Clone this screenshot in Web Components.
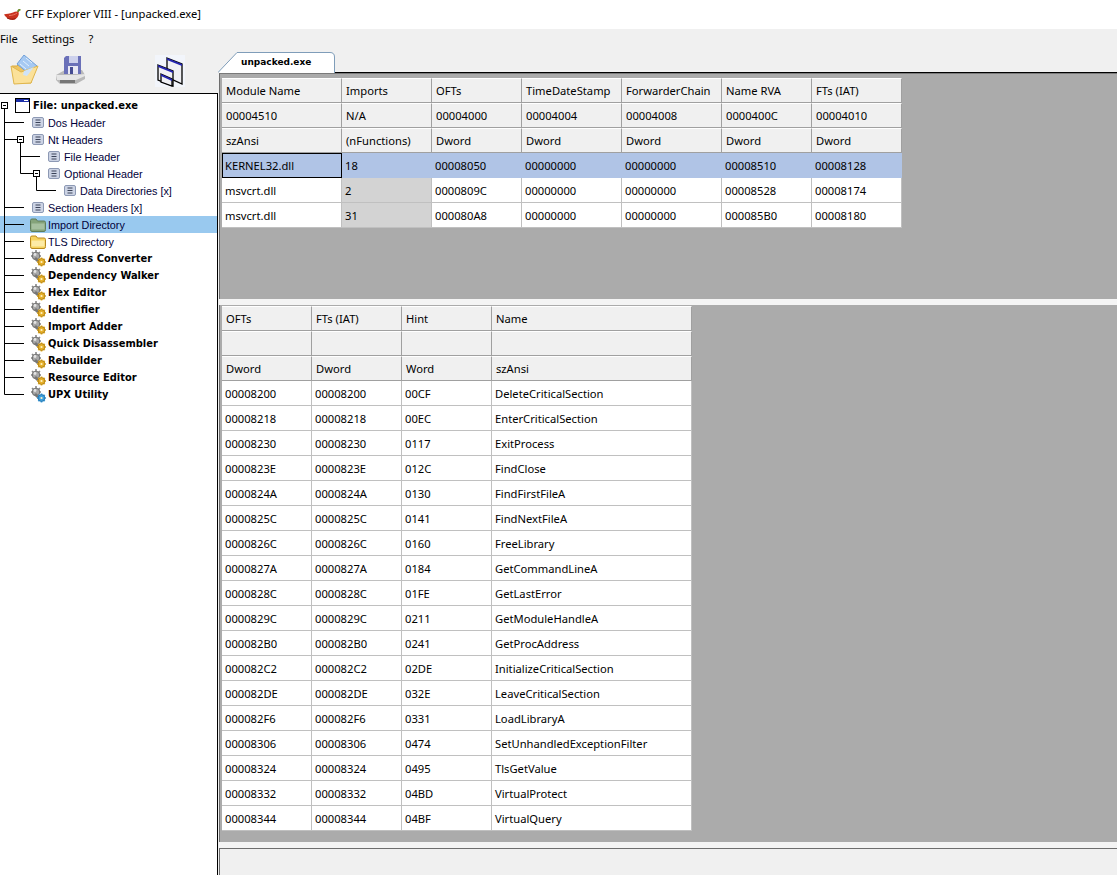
<!DOCTYPE html>
<html>
<head>
<meta charset="utf-8">
<title>CFF Explorer VIII - [unpacked.exe]</title>
<style>
  html, body { margin: 0; height: 100%; overflow: hidden; background: #f0f0f0; }
  body { font: 11.200px "Noto Sans", "Liberation Sans", sans-serif; color: #000; }
</style>
</head>
<body>
<cff-app></cff-app>

<script>
const gearIcon = (c, d) => `<svg width="16" height="17" viewBox="0 0 16 17">
  <path d="M6 0v2M2 2l1.500 1.500M10 2L8.500 3.500M1 6h2M11 6H9" stroke="#8a8a8a" stroke-width="1.600"/>
  <circle cx="6" cy="6" r="3.800" fill="#a8a8a8" stroke="#5c5c5c" stroke-width=".8"/><circle cx="5" cy="4.500" r="1.400" fill="#e4e4e4"/>
  <path d="M6 7l5 5-2 2-5-5z" fill="#777"/>
  <path d="M11.500 7.500v9M7 12h9M8.300 8.800l6.400 6.400M14.700 8.800l-6.400 6.400" stroke="${c}" stroke-width="1.700"/>
  <circle cx="11.500" cy="12" r="3.400" fill="${c}" stroke="${d}" stroke-width=".8"/><circle cx="11.500" cy="12" r="1.100" fill="#fff3c4"/></svg>`;

const ICONS = {
  pepper: `<svg width="17" height="12" viewBox="0 0 17 12"><path d="M0 5.500C2 4.500 6 5 9 3.500c2-1 4-1.500 5.500-.5 1 3-1 6-3.500 7.500C7 12 2 9 0 5.500z" fill="#c8321e"/><path d="M3 9c3 1.500 6 1.500 8.500.5" stroke="#8e1d10" fill="none"/><path d="M5 6.500c3 0 6-1 8-2.500" stroke="#ea7a64" fill="none"/><path d="M14 3c0-1.500 1-2.500 2.500-2.500" stroke="#6d8c2a" stroke-width="1.800" fill="none"/></svg>`,
  open: `<svg width="30" height="30" viewBox="0 0 30 30">
    <path d="M2 11h5l2-2 8 1 7 4-3 14H5z" fill="#eec462" stroke="#d8aa3f"/>
    <path d="M7 9l7-9 13 11-8 8z" fill="#a6c9f2" stroke="#6f9fd8"/>
    <path d="M10 9l6 5M13 6l6 5M16 3l6 5" stroke="#e3f0fc"/>
    <path d="M1 11l10 6 17-6-7 17-17 1z" fill="#fbe19a" stroke="#e0b64c"/>
    <path d="M14 16l10-4-7 9-4-1z" fill="#cfe3f8"/></svg>`,
  disk: `<svg width="30" height="30" viewBox="0 0 30 30">
    <path d="M0 20l9-5h17l3 5v4l-9 5H4l-4-4z" fill="#b9b9b9"/>
    <path d="M0 20h20l9-1v2l-9 4H1z" fill="#e6e6e6"/><path d="M4 25h15v3H4z" fill="#777"/>
    <path d="M10 1h15v18H8V3z" fill="#6a70b8"/><path d="M13 1h9v7h-9z" fill="#cdd1ec"/>
    <path d="M12 11h10v8H12z" fill="#e8e8f4"/><path d="M14 12h3v7h-3z" fill="#454c92"/></svg>`,
  windows: `<svg width="30" height="32" viewBox="0 0 30 32"><rect width="30" height="32" fill="#f2f5fb"/>
    <g stroke="#000" stroke-width="1.300" fill="#f0f0f4"><path d="M12 3l15 6v20l-15-7z"/><path d="M3 10l15 6v15L3 25z"/><path d="M6 19l11 5v7L6 27z"/></g>
    <path d="M12 3l15 6v2L12 5zM3 10l15 6v2L3 12zM6 19l11 5v2L6 21z" fill="#2424b0"/></svg>`,
  window: `<svg width="15" height="15" viewBox="0 0 15 15"><rect x=".5" y=".5" width="14" height="14" fill="#fff" stroke="#000"/><rect x="1" y="1" width="13" height="3" fill="#1c2fa8"/><rect x="9" y="2" width="4" height="1" fill="#fff"/></svg>`,
  doc: `<svg width="12" height="11" viewBox="0 0 12 11"><rect x=".5" y=".5" width="11" height="10" rx="1.500" fill="#ccd3e4" stroke="#8d99b4"/><path d="M3.500 3h5M3.500 5.500h5M3.500 8h5" stroke="#3a4258"/></svg>`,
  folder: `<svg width="16" height="14" viewBox="0 0 16 14"><path d="M.5 2.500Q.5 1 2 1h4l1.500 2H14q1.500 0 1.500 1.500v7q0 2-1.500 2H2q-1.500 0-1.500-2z" fill="#f6d35f" stroke="#b98a20"/><path d="M1.500 5.500h13v6H1.500z" fill="#fdeba6"/></svg>`,
  folderSel: `<svg width="16" height="14" viewBox="0 0 16 14"><path d="M.5 2.500Q.5 1 2 1h4l1.500 2H14q1.500 0 1.500 1.500v7q0 2-1.500 2H2q-1.500 0-1.500-2z" fill="#84a37a" stroke="#5f7d5a"/><path d="M1.500 5.500h13v6H1.500z" fill="#a6c0a0"/></svg>`,
  gear: gearIcon("#e6b02a", "#a87a10"),
  gearBlue: gearIcon("#3fa0dc", "#1f6ea8")
};

class TitleBar extends HTMLElement {
  constructor() {
    super();
    this.attachShadow({ mode: "open" }).innerHTML = `
      <style>
        :host { display: flex; align-items: center; height: 29px; background: #fff; padding: 0 0 0 4px; box-sizing: border-box; }
        svg { display: block; margin-right: 4px; }
        span { position: relative; top: -1px; }
      </style>
      ${ICONS.pepper}<span><slot></slot></span>`;
  }
}

class MenuBar extends HTMLElement {
  constructor() {
    super();
    this.attachShadow({ mode: "open" }).innerHTML = `
      <style>
        :host { display: flex; gap: 14px; height: 21px; box-sizing: border-box; padding-bottom: 2px; align-items: center; background: #f0f0f0; }
        ::slotted(span) { display: block; }
      </style>
      <slot></slot>`;
  }
}

class ToolBar extends HTMLElement {
  constructor() {
    super();
    this.attachShadow({ mode: "open" }).innerHTML = `
      <style>
        :host { display: flex; height: 43px; box-sizing: border-box; padding: 5px 0 0 10px; background: #f0f0f0; }
        svg { display: block; flex: none; }
        .disk { margin-left: 16px; }
        .win { margin-left: 69px; }
      </style>
      ${ICONS.open}<span class="disk">${ICONS.disk}</span><span class="win">${ICONS.windows}</span>`;
  }
}

class TreeRow extends HTMLElement {
  connectedCallback() {
    if (this.shadowRoot) return;
    const w = this.getAttribute("guide-width");
    const gap = this.getAttribute("gap") || 4;
    const icon = ICONS[this.getAttribute("icon")];
    this.attachShadow({ mode: "open" }).innerHTML = `
      <style>
        :host { display: flex; align-items: center; height: 17px; white-space: nowrap;
                font: 10.800px "Liberation Sans", sans-serif; color: #00003a; }
        :host([bold]) { font: bold 11px "DejaVu Sans Condensed", "Liberation Sans", sans-serif; color: #000; }
        :host([selected]) { background: #99c9ef; }
        .guide { flex: none; display: block; }
        .guide path { fill: none; stroke: #000; }
        .guide rect { fill: #fff; stroke: #000; }
        .icon { flex: none; display: flex; margin-right: ${gap}px; }
        .text { padding-top: 1px; }
        :host([bold]) .text { padding-top: 0; }
      </style>
      <svg class="guide" width="${w}" height="17">${this.getAttribute("guide")}</svg>
      <span class="icon">${icon}</span><span class="text"><slot></slot></span>`;
  }
}

class TreeView extends HTMLElement {
  constructor() {
    super();
    this.attachShadow({ mode: "open" }).innerHTML = `
      <style>
        :host { display: block; height: 100%; box-sizing: border-box; background: #fff;
                border-top: 1px solid #000; border-right: 1px solid #000; padding-top: 3px; overflow: hidden; }
      </style>
      <slot></slot>`;
  }
}

// boxes with a minus sign, and the connector lines for each row
const box = (cx) => `<rect x="${cx - 3}" y="5.500" width="6" height="6"/><path d="M${cx - 1.500} 8.500h3"/>`;
const trunk = `<path d="M4.500 0v17"/>`;
const leaf = trunk + `<path d="M4.500 8.500H24"/>`;
const TREE = [
  { label: "File: unpacked.exe", icon: "window", gw: 15, gap: 3, bold: 1, guide: box(4.5) + `<path d="M4.500 11.500V17"/>` },
  { label: "Dos Header", icon: "doc", gw: 32, guide: leaf },
  { label: "Nt Headers", icon: "doc", gw: 32, guide: trunk + `<path d="M4.500 8.500H17M20.500 11.500V17"/>` + box(20.5) },
  { label: "File Header", icon: "doc", gw: 48, guide: trunk + `<path d="M20.500 0v17M20.500 8.500H40"/>` },
  { label: "Optional Header", icon: "doc", gw: 48, guide: trunk + `<path d="M20.500 0v8.500H33M36.500 11.500V17"/>` + box(36.5) },
  { label: "Data Directories [x]", icon: "doc", gw: 64, guide: trunk + `<path d="M36.500 0v8.500H56"/>` },
  { label: "Section Headers [x]", icon: "doc", gw: 32, guide: leaf },
  { label: "Import Directory", icon: "folderSel", gw: 30, gap: 2, selected: 1, guide: leaf },
  { label: "TLS Directory", icon: "folder", gw: 30, gap: 2, guide: leaf },
  ...["Address Converter", "Dependency Walker", "Hex Editor", "Identifier", "Import Adder",
      "Quick Disassembler", "Rebuilder", "Resource Editor"].map(label =>
    ({ label, icon: "gear", gw: 30, gap: 2, bold: 1, guide: leaf })),
  { label: "UPX Utility", icon: "gearBlue", gw: 30, gap: 2, bold: 1, guide: `<path d="M4.500 0v8.500H24"/>` }
];

class TabStrip extends HTMLElement {
  constructor() {
    super();
    this.attachShadow({ mode: "open" }).innerHTML = `
      <style>
        :host { display: block; height: 23px; box-sizing: border-box; background: #f0f0f0; border-bottom: 1px solid #000; padding-top: 2px; }
        .tab { display: grid; width: 117px; height: 21px; }
        .tab > * { grid-area: 1 / 1; }
        svg { display: block; }
        span { font: bold 9px "DejaVu Sans", sans-serif; padding: 5px 0 0 23px; }
      </style>
      <div class="tab">
        <svg width="117" height="21"><path d="M0 20.500L19 .5H112Q116.500 .5 116.500 5V21H0z" fill="#fff"/><path d="M0 20.500L19 .5H112Q116.500 .5 116.500 5V21" fill="none" stroke="#7f9db9"/></svg>
        <span><slot></slot></span>
      </div>`;
  }
}

class DataGrid extends HTMLElement {
  constructor() {
    super();
    this.shadowDOM = this.attachShadow({ mode: "open" });
  }

  set table(t) {
    this._table = t;
    this.render();
  }

  render() {
    const t = this._table;
    const cols = t.widths.map(w => w + "px").join(" ");
    const head = t.head.map(r => r.map(c => `<div class="h">${c || ""}</div>`).join("")).join("");
    const body = t.rows.map((r, i) => r.map((c, j) => {
      let cls = "d";
      if (t.selected === i) cls += " sel";
      if (t.selected === i && j === 0) cls += " cur";
      if (t.shaded === j && t.selected !== i) cls += " shade";
      return `<div class="${cls}">${c}</div>`;
    }).join("")).join("");
    this.shadowDOM.innerHTML = `
      <style>
        :host { display: grid; grid-template-columns: ${cols}; grid-auto-rows: 25px; width: max-content; }
        div { box-sizing: border-box; height: 25px; white-space: nowrap; overflow: hidden; font-size: 11.200px; }
        .h { background: #f0f0f0; padding-left: 4px; line-height: 23px; border-right: 1px solid #a0a0a0; border-bottom: 1px solid #a0a0a0; border-top: 1px solid #fff; }
        .d { background: #fff; padding-left: 3px; line-height: 25px; border-right: 1px solid #c0c0c0; border-bottom: 1px solid #c0c0c0; }
        .sel { background: #b0c4e6; border-color: #b0c4e6; }
        .cur { border: 1px solid #000; padding-left: 2px; line-height: 23px; }
        .shade { background: #d3d3d3; }
      </style>
      ${head}${body}`;
  }
}

class SplitPane extends HTMLElement {
  constructor() {
    super();
    this.attachShadow({ mode: "open" }).innerHTML = `
      <style>
        :host { display: block; box-sizing: border-box; background: #ababab; overflow: hidden;
                border-left: 1px solid #6e6e6e; padding: var(--pad, 0 0 0 2px); height: var(--h); }
      </style>
      <slot></slot>`;
  }
}

class CffApp extends HTMLElement {
  constructor() {
    super();
    this.attachShadow({ mode: "open" }).innerHTML = `
      <style>
        :host { display: grid; grid-template-rows: 29px 21px 1fr; height: 875px; overflow: hidden; }
        .work { display: grid; grid-template-columns: 218px 1fr; min-height: 0; }
        .left { display: grid; grid-template-rows: 43px 1fr; min-height: 0; }
        .right { display: flex; flex-direction: column; min-width: 0; }
        .content { flex: 1; padding-left: 1px; background: #f0f0f0; display: flex; flex-direction: column; }
        .split { height: 6px; background: #f4f4f4; flex: none; }
        .status { flex: 1; background: #f0f0f0; border-top: 1px solid #6e6e6e; border-left: 1px solid #6e6e6e; }
        .top { --h: 226px; --pad: 4px 0 0 2px; border-top: 1px solid #7a7a7a; }
        .bottom { --h: 537px; --pad: 1px 0 0 2px; }
      </style>
      <title-bar>CFF Explorer VIII - [unpacked.exe]</title-bar>
      <menu-bar><span>File</span><span>Settings</span><span>?</span></menu-bar>
      <div class="work">
        <div class="left">
          <tool-bar></tool-bar>
          <tree-view id="tree"></tree-view>
        </div>
        <div class="right">
          <tab-strip>unpacked.exe</tab-strip>
          <div class="content">
            <split-pane class="top"><data-grid id="imports"></data-grid></split-pane>
            <div class="split"></div>
            <split-pane class="bottom"><data-grid id="thunks"></data-grid></split-pane>
            <div class="split"></div>
            <div class="status"></div>
          </div>
        </div>
      </div>`;

    const tree = this.shadowRoot.getElementById("tree");
    TREE.forEach(r => {
      const row = document.createElement("tree-row");
      row.setAttribute("icon", r.icon);
      row.setAttribute("guide-width", r.gw);
      row.setAttribute("guide", r.guide);
      if (r.gap) row.setAttribute("gap", r.gap);
      if (r.bold) row.setAttribute("bold", "");
      if (r.selected) row.setAttribute("selected", "");
      row.textContent = r.label;
      tree.appendChild(row);
    });

    this.shadowRoot.getElementById("imports").table = {
      widths: [120, 90, 90, 100, 100, 90, 90],
      head: [
        ["Module Name", "Imports", "OFTs", "TimeDateStamp", "ForwarderChain", "Name RVA", "FTs (IAT)"],
        ["00004510", "N/A", "00004000", "00004004", "00004008", "0000400C", "00004010"],
        ["szAnsi", "(nFunctions)", "Dword", "Dword", "Dword", "Dword", "Dword"]
      ],
      rows: [
        ["KERNEL32.dll", "18", "00008050", "00000000", "00000000", "00008510", "00008128"],
        ["msvcrt.dll", "2", "0000809C", "00000000", "00000000", "00008528", "00008174"],
        ["msvcrt.dll", "31", "000080A8", "00000000", "00000000", "000085B0", "00008180"]
      ],
      selected: 0,
      shaded: 1
    };

    const fns = [
      ["00008200", "00CF", "DeleteCriticalSection"], ["00008218", "00EC", "EnterCriticalSection"],
      ["00008230", "0117", "ExitProcess"], ["0000823E", "012C", "FindClose"],
      ["0000824A", "0130", "FindFirstFileA"], ["0000825C", "0141", "FindNextFileA"],
      ["0000826C", "0160", "FreeLibrary"], ["0000827A", "0184", "GetCommandLineA"],
      ["0000828C", "01FE", "GetLastError"], ["0000829C", "0211", "GetModuleHandleA"],
      ["000082B0", "0241", "GetProcAddress"], ["000082C2", "02DE", "InitializeCriticalSection"],
      ["000082DE", "032E", "LeaveCriticalSection"], ["000082F6", "0331", "LoadLibraryA"],
      ["00008306", "0474", "SetUnhandledExceptionFilter"], ["00008324", "0495", "TlsGetValue"],
      ["00008332", "04BD", "VirtualProtect"], ["00008344", "04BF", "VirtualQuery"]
    ];
    this.shadowRoot.getElementById("thunks").table = {
      widths: [90, 90, 90, 200],
      head: [["OFTs", "FTs (IAT)", "Hint", "Name"], ["", "", "", ""], ["Dword", "Dword", "Word", "szAnsi"]],
      rows: fns.map(f => [f[0], f[0], f[1], f[2]])
    };
  }
}

customElements.define("title-bar", TitleBar);
customElements.define("menu-bar", MenuBar);
customElements.define("tool-bar", ToolBar);
customElements.define("tree-row", TreeRow);
customElements.define("tree-view", TreeView);
customElements.define("tab-strip", TabStrip);
customElements.define("data-grid", DataGrid);
customElements.define("split-pane", SplitPane);
customElements.define("cff-app", CffApp);
</script>
</body>
</html>
